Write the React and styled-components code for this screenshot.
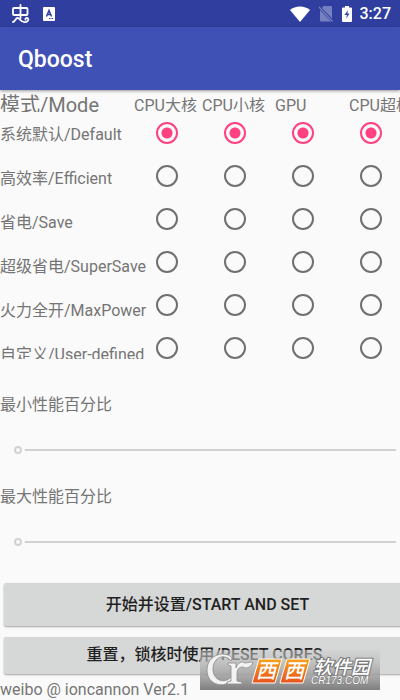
import React, { useState } from 'react';
import styled, { createGlobalStyle } from 'styled-components';

const GlobalStyle = createGlobalStyle`
    * {
        box-sizing: border-box;
    }

    body {
        margin: 0;
        overflow-x: hidden;
        background: #fafafa;
        color: #757575;
        font-family: Roboto, 'Noto Sans CJK SC', sans-serif;
        font-size: 16px;
        line-height: 20px;
    }
`;

// Top bars
const StatusBar = styled.div`
    display: flex;
    align-items: center;
    gap: 12px;
    height: 27px;
    padding: 0 9px 0 11px;
    background: #303f9f;
    color: #ffffff;
`;

const StatusIcons = styled.div`
    display: flex;
    align-items: center;
    gap: 8px;
    margin-left: auto;
`;

const Clock = styled.span`
    font-size: 16px;
    font-weight: 500;
`;

const AppBar = styled.header`
    display: flex;
    align-items: center;
    height: 63px;
    padding: 2px 18px 0;
    background: #3f51b5;
    box-shadow: 0 1px 3px rgba(0, 0, 0, 0.4);
`;

const Title = styled.h1`
    margin: 0;
    color: #ffffff;
    font-size: 23px;
    font-weight: 500;
    line-height: 28px;
`;

// Mode table
const HeadRow = styled.div`
    display: flex;
    align-items: flex-end;
    height: 22px;
    overflow: hidden;
    white-space: nowrap;
`;

const ModeHeading = styled.span`
    flex: none;
    width: 134px;
    font-size: 20px;
    line-height: 14px;
`;

const ColumnHeading = styled.span`
    flex: none;
    width: ${(props) => props.$width}px;
    line-height: 12px;
`;

const ModeGrid = styled.div`
    display: flex;
    height: 247px;
    overflow: hidden;
`;

const ModeNames = styled.div`
    flex: none;
    width: 156px;
    padding-top: 1px;
    white-space: nowrap;
`;

const ModeName = styled.div`
    line-height: 44px;
`;

const CoreColumn = styled.div`
    display: flex;
    flex: none;
    flex-direction: column;
    gap: 21px;
    width: 68px;
    padding-top: 10px;
`;

const Radio = styled.input`
    flex: none;
    appearance: none;
    width: 22px;
    height: 22px;
    margin: 0;
    border: 2px solid #707070;
    border-radius: 50%;
    cursor: pointer;

    &:checked {
        border-color: #ff4081;
        background: radial-gradient(circle, #ff4081 5px, transparent 6px);
    }
`;

// Percentage sliders
const SliderField = styled.label`
    display: flex;
    flex-direction: column;
    gap: 26px;
    height: 92px;
`;

const Sliders = styled.div`
    padding-top: 36px;
`;

const Slider = styled.input`
    appearance: none;
    height: 18px;
    margin: 0 4px 0 14px;
    background: linear-gradient(#d2d2d2, #d2d2d2) center / 100% 2px no-repeat;

    &::-webkit-slider-thumb {
        appearance: none;
        width: 8px;
        height: 8px;
        border: 2px solid #d2d2d2;
        border-radius: 50%;
        background: #fafafa;
        box-shadow: 0 0 0 3px #fafafa;
    }
`;

// The content runs a little past the right edge of the screen
const Actions = styled.div`
    display: flex;
    flex-direction: column;
    gap: 11px;
    margin: 4px -11px 0 4px;
`;

const ActionButton = styled.button`
    height: ${(props) => (props.$compact ? 37 : 43)}px;
    padding: ${(props) => (props.$compact ? '0 6px 2px 0' : '0')};
    border: none;
    border-radius: 2px;
    background: #d6d7d7;
    box-shadow: 0 1px 2px rgba(0, 0, 0, 0.35);
    color: #1f1f1f;
    font: inherit;
    font-weight: 500;
    cursor: pointer;
`;

const Bottom = styled.div`
    position: relative;
`;

const Version = styled.div`
    padding-top: 6px;
`;

const Watermark = styled.svg`
    position: absolute;
    right: 20px;
    bottom: 10px;
`;

const modes = [
    '系统默认/Default',
    '高效率/Efficient',
    '省电/Save',
    '超级省电/SuperSave',
    '火力全开/MaxPower',
    '自定义/User-defined',
];

const cores = [
    { name: 'CPU大核', width: 68 },
    { name: 'CPU小核', width: 73 },
    { name: 'GPU', width: 74 },
    { name: 'CPU超核', width: 68 },
];

const BugIcon = () => (
    <svg width="20" height="21" viewBox="0 0 20 21" fill="none" stroke="#fff" strokeWidth="1.800" strokeLinecap="round" strokeLinejoin="round">
        <path d="M3 5h12.500a1 1 0 0 1 1 1v5a1 1 0 0 1-1 1H3a1 1 0 0 1-1-1V6a1 1 0 0 1 1-1zM9.500 2v13" />
        <path d="M2 19c2.500-.5 2.500-4 4.500-4 2.500 0 3 4.200 7 4.200 3 0 4.500-2 3.500-3.700-1-1.300-3-.3-2.500 1.200" />
    </svg>
);

const KeyboardIcon = () => (
    <svg width="12" height="14" viewBox="0 0 12 14">
        <rect width="12" height="14" rx="1" fill="#fff" />
        <path d="M3.500 9.500 6 3.500l2.500 6M4.500 7.500h3" fill="none" stroke="#303f9f" strokeWidth="1.500" />
        <path d="M6 11.500h1.500M8.500 11.500H10" stroke="#303f9f" />
    </svg>
);

const WifiIcon = () => (
    <svg width="20" height="16" viewBox="0 0 20 16">
        <path d="M0 4C5-.8 15-.8 20 4L10 16z" fill="#fff" />
    </svg>
);

const NoSimIcon = () => (
    <svg width="16" height="18" viewBox="0 0 16 18">
        <path d="M5.500 1H13a1 1 0 0 1 1 1v11.500L4 3zM2 5l11 11.500H3a1 1 0 0 1-1-1z" fill="#7580c0" />
        <path d="m1 2 13.500 14.500" stroke="#7580c0" strokeWidth="1.200" />
    </svg>
);

const BatteryIcon = () => (
    <svg width="10" height="16" viewBox="0 0 10 16">
        <path d="M3 0h4v1.500h2a1 1 0 0 1 1 1V15a1 1 0 0 1-1 1H1a1 1 0 0 1-1-1V2.500a1 1 0 0 1 1-1h2z" fill="#fff" />
        <path d="M6 4 2.500 9H5l-1 4 3.500-5.500H5.300z" fill="#303f9f" />
    </svg>
);

const SiteMark = () => (
    <Watermark width="180" height="40" viewBox="0 0 180 40" aria-label="西西软件园">
        <defs>
            <linearGradient id="plate" x1="0" y1="0" x2="0" y2="1">
                <stop offset="0" stopColor="#d0d0d0" stopOpacity="0.5" />
                <stop offset="0.5" stopColor="#aaaaaa" stopOpacity="0.8" />
                <stop offset="1" stopColor="#7e7e7e" />
            </linearGradient>
            <linearGradient id="tile" x1="0" y1="0" x2="0" y2="1">
                <stop offset="0" stopColor="#f7a21b" />
                <stop offset="1" stopColor="#e8521c" />
            </linearGradient>
        </defs>
        <rect width="180" height="40" fill="url(#plate)" />
        <g fill="#f2f2f2" stroke="#8a8a8a" strokeWidth="0.800">
            <path fillRule="evenodd" d="M32 8C26 0 7 4 7 20c0 16 19 19 25 9l-1-2c-6 7-18 4-18-8S25 3 31 11z" />
            <path d="M28 13h8v5c2-6 6-7 9-5 3 0 5-2 8 0-3 5-7 6-10 4-4 0-6 2-6 7v7l5 1v2H27v-2l4-1V16l-3-1z" />
        </g>
        <path d="M59 9h23l-7 24H52zM87 9h23l-7 24H80z" fill="url(#tile)" stroke="#fff" strokeWidth="1" />
        <g fill="#fff" fontFamily="'Noto Sans CJK SC', sans-serif" fontStyle="italic">
            <text x="56" y="28" fontSize="20" fontWeight="500">西</text>
            <text x="84" y="28" fontSize="20" fontWeight="500">西</text>
            <text x="113" y="24" fontSize="19" fontWeight="500" stroke="#777" strokeWidth="2" paintOrder="stroke">软件园</text>
        </g>
        <text x="111" y="34" fontFamily="'Liberation Sans', sans-serif" fontSize="10" fontStyle="italic" fill="#fff" stroke="#777" strokeWidth="1" paintOrder="stroke">
            CR173.COM
        </text>
    </Watermark>
);

export default function App() {
    const [selected, setSelected] = useState(cores.map(() => 0));
    const [min, setMin] = useState(0);
    const [max, setMax] = useState(0);

    const selectMode = (core, mode) => {
        setSelected(selected.map((value, i) => (i === core ? mode : value)));
    };

    return (
        <>
            <GlobalStyle />
            <StatusBar>
                <BugIcon />
                <KeyboardIcon />
                <StatusIcons>
                    <WifiIcon />
                    <NoSimIcon />
                    <BatteryIcon />
                    <Clock>3:27</Clock>
                </StatusIcons>
            </StatusBar>
            <AppBar>
                <Title>Qboost</Title>
            </AppBar>

            <main>
                <HeadRow>
                    <ModeHeading>模式/Mode</ModeHeading>
                    {cores.map((core) => (
                        <ColumnHeading key={core.name} $width={core.width}>{core.name}</ColumnHeading>
                    ))}
                </HeadRow>
                <ModeGrid>
                    <ModeNames>
                        {modes.map((mode) => (
                            <ModeName key={mode}>{mode}</ModeName>
                        ))}
                    </ModeNames>
                    {cores.map((core, i) => (
                        <CoreColumn key={core.name} role="radiogroup" aria-label={core.name}>
                            {modes.map((mode, j) => (
                                <Radio
                                    key={mode}
                                    type="radio"
                                    name={core.name}
                                    aria-label={mode}
                                    checked={selected[i] === j}
                                    onChange={() => selectMode(i, j)}
                                />
                            ))}
                        </CoreColumn>
                    ))}
                </ModeGrid>

                <Sliders>
                    <SliderField>
                        最小性能百分比
                        <Slider type="range" value={min} onChange={(e) => setMin(e.target.value)} />
                    </SliderField>
                    <SliderField>
                        最大性能百分比
                        <Slider type="range" value={max} onChange={(e) => setMax(e.target.value)} />
                    </SliderField>
                </Sliders>

                <Bottom>
                    <Actions>
                        <ActionButton type="button">开始并设置/START AND SET</ActionButton>
                        <ActionButton type="button" $compact>重置，锁核时使用/RESET CORES</ActionButton>
                    </Actions>
                    <Version>weibo @ ioncannon Ver2.1</Version>
                    <SiteMark />
                </Bottom>
            </main>
        </>
    );
}
